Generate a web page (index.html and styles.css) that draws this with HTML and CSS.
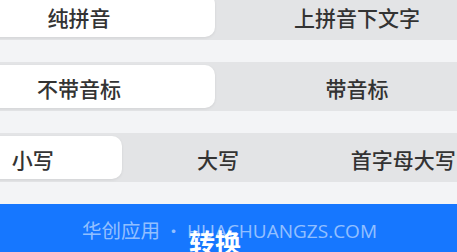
FILE: index.html
```html
<!DOCTYPE html>
<html lang="zh-CN">
<head>
  <meta charset="UTF-8" />
  <meta name="viewport" content="width=device-width, initial-scale=1.0"/>
  <title>拼音转换</title>
  <link rel="stylesheet" href="styles.css">
</head>
<body>
  <main class="page">
    <div class="seg">
      <div class="seg-item active">纯拼音</div>
      <div class="seg-item">上拼音下文字</div>
    </div>
    <div class="seg">
      <div class="seg-item active">不带音标</div>
      <div class="seg-item">带音标</div>
    </div>
    <div class="seg">
      <div class="seg-item active">小写</div>
      <div class="seg-item">大写</div>
      <div class="seg-item">首字母大写</div>
    </div>
    <div class="convert-wrap">
      <button class="convert">转换</button>
      <div class="watermark">华创应用<span class="dot">•</span><span class="site">HUACHUANGZS.COM</span></div>
    </div>
  </main>
</body>
</html>
```

FILE: styles.css
```css
body {
  margin: 0;
  background: #f3f4f6;
  overflow: hidden;
  font-family: "Noto Sans CJK SC", "Noto Sans", sans-serif;
}
.page {
  width: 562px;
  margin: -9px 0 0 -66px;
  display: flex;
  flex-direction: column;
  gap: 22px;
}
.seg {
  display: flex;
  height: 49px;
  padding: 3px;
  box-sizing: border-box;
  background: #e3e4e6;
  border-radius: 12px;
}
.seg-item {
  flex: 1;
  display: flex;
  align-items: center;
  justify-content: center;
  padding: 3px 0 0 6px;
  box-sizing: border-box;
  font-size: 21px;
  font-weight: 500;
  color: #333;
  border-radius: 10px;
}
.seg-item.active {
  background: #fff;
  box-shadow: 0 1px 3px rgba(0, 0, 0, 0.08);
}
.convert-wrap {
  position: relative;
}
.convert {
  display: block;
  width: 100%;
  height: 74px;
  border: none;
  border-radius: 6px;
  background: #1677ff;
  color: #fff;
  font-family: inherit;
  font-size: 26px;
  font-weight: bold;
  padding: 0;
}
.watermark {
  position: absolute;
  top: 11px;
  left: 148px;
  font-size: 19.5px;
  color: rgba(255, 255, 255, 0.55);
  white-space: nowrap;
  pointer-events: none;
}
.dot {
  margin: 0 5px;
  font-size: 17px;
}
.site {
  font-size: 19px;
  font-family: "Open Sans", "Noto Sans", sans-serif;
}
```
